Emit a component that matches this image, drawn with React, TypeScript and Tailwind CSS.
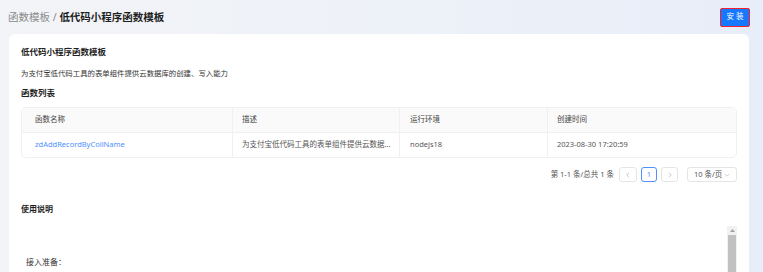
const cols = [
  { title: "函数名称", w: "w-[211px]", pl: "pl-[13px]" },
  { title: "描述", w: "w-[167px]", pl: "pl-[9px]" },
  { title: "运行环境", w: "w-[148px]", pl: "pl-[10px]" },
  { title: "创建时间", w: "flex-1", pl: "pl-[9px]" },
]

const App = () => {
  return (
    <div
      className="w-[763px] h-[272px] overflow-hidden bg-gradient-to-r from-[#f3f4f7] to-[#e8eef9] text-[#333]"
      style={{ fontFamily: '"Noto Sans", "Noto Sans CJK SC", sans-serif' }}
    >
      {/* Header */}
      <div className="h-[34px] flex items-center justify-between pl-[8px] pr-[13px]">
        <div className="text-[10.5px] leading-none">
          <span className="text-[#8a8a8a]">函数模板</span>
          <span className="text-[#8a8a8a]"> / </span>
          <span className="font-bold text-[#1f1f1f]">低代码小程序函数模板</span>
        </div>
        <button className="h-[19px] w-[30px] bg-[#1677ff] text-white text-[7.5px] tracking-[2px] pl-[2px] rounded-[2px] border-[1.5px] border-[#f5222d] flex items-center justify-center">
          安装
        </button>
      </div>

      {/* Card */}
      <div className="ml-[9px] w-[740px] h-[240px] bg-white rounded-t-[6px] pl-[12px] pr-[12px] pt-[13px]">
        <div className="text-[8.5px] font-bold text-[#1f1f1f] leading-[10px]">低代码小程序函数模板</div>
        <div className="mt-[11px] text-[7.4px] text-[#333] leading-[10px]">为支付宝低代码工具的表单组件提供云数据库的创建、写入能力</div>
        <div className="mt-[10px] text-[8.5px] font-bold text-[#1f1f1f] leading-[10px]">函数列表</div>

        {/* Table */}
        <div className="mt-[9px] border border-[#f0f0f0] rounded-[5px] overflow-hidden text-[7.5px]">
          <div className="flex h-[25px] bg-[#fafafa] border-b border-[#f0f0f0] text-[#444]">
            {cols.map((c, i) => (
              <div
                key={c.title}
                className={`${c.w} ${c.pl} flex items-center ${i < cols.length - 1 ? "border-r border-[#f0f0f0]" : ""}`}
              >
                {c.title}
              </div>
            ))}
          </div>
          <div className="flex h-[24px] text-[#555]">
            <div className="w-[211px] pl-[13px] flex items-center border-r border-[#f0f0f0] text-[#4d90fe]">zdAddRecordByCollName</div>
            <div className="w-[167px] pl-[9px] flex items-center border-r border-[#f0f0f0]">为支付宝低代码工具的表单组件提供云数据...</div>
            <div className="w-[148px] pl-[10px] flex items-center border-r border-[#f0f0f0]">nodejs18</div>
            <div className="flex-1 pl-[9px] flex items-center">2023-08-30 17:20:59</div>
          </div>
        </div>

        {/* Pagination */}
        <div className="mt-[9px] flex items-center justify-end gap-[4px] text-[7.5px] text-[#555]">
          <span className="mr-[1px]">第 1-1 条/总共 1 条</span>
          <div className="w-[18px] h-[15px] border border-[#e5e5e5] rounded-[3px] flex items-center justify-center text-[#bbb]">
            <svg width="6" height="6" viewBox="0 0 6 6" fill="none" stroke="currentColor" strokeWidth="0.8"><path d="M4 0.8 1.8 3 4 5.2" /></svg>
          </div>
          <div className="w-[16px] h-[15px] border border-[#4d90fe] rounded-[3px] flex items-center justify-center text-[#4d90fe]">1</div>
          <div className="w-[17px] h-[15px] border border-[#e5e5e5] rounded-[3px] flex items-center justify-center text-[#bbb]">
            <svg width="6" height="6" viewBox="0 0 6 6" fill="none" stroke="currentColor" strokeWidth="0.8"><path d="M2 0.8 4.2 3 2 5.2" /></svg>
          </div>
          <div className="ml-[5px] w-[50px] h-[15px] border border-[#e5e5e5] rounded-[3px] flex items-center justify-between px-[6px] text-[#555]">
            <span>10 条/页</span>
            <svg width="6" height="6" viewBox="0 0 6 6" fill="none" stroke="#bbb" strokeWidth="0.7"><path d="M0.8 2 3 4.2 5.2 2" /></svg>
          </div>
        </div>

        {/* Usage */}
        <div className="mt-[22px] text-[8px] font-bold text-[#1f1f1f] leading-[10px]">使用说明</div>
        <div className="mt-[12px] h-[60px] flex">
          <div className="flex-1 pt-[30px] pl-[5px] text-[8px] text-[#333]">接入准备：</div>
          <div className="w-[10px] bg-[#f1f1f1] flex flex-col">
            <div className="h-[9px] flex items-center justify-center">
              <svg width="5" height="3" viewBox="0 0 5 3"><path d="M0 3 2.5 0 5 3z" fill="#a3a3a3" /></svg>
            </div>
            <div className="flex-1 mx-[1px] bg-[#c1c1c1]" />
          </div>
        </div>
      </div>
    </div>
  )
}

export default App
